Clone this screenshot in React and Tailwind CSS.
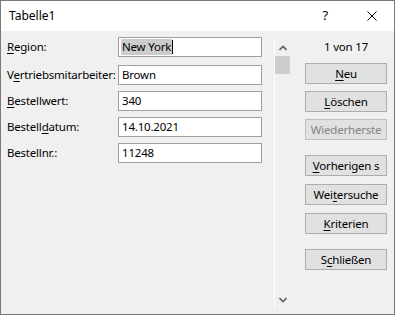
import React from 'react';

const fields = [
  { key: 'R', rest: 'egion:', pre: '', value: 'New York', selected: true },
  { pre: 'V', key: 'e', rest: 'rtriebsmitarbeiter:', value: 'Brown' },
  { pre: '', key: 'B', rest: 'estellwert:', value: '340' },
  { pre: 'Bestell', key: 'd', rest: 'atum:', value: '14.10.2021' },
  { pre: 'Bestellnr.:', key: '', rest: '', value: '11248' },
];

const buttons = [
  { pre: '', key: 'N', rest: 'eu', mt: 'mt-[9px]' },
  { pre: '', key: 'L', rest: 'öschen', mt: 'mt-[7px]' },
  { pre: 'Wiederherste', key: '', rest: '', mt: 'mt-[7px]', disabled: true },
  { pre: '', key: 'V', rest: 'orherigen s', mt: 'mt-[15px]' },
  { pre: 'Wei', key: 't', rest: 'ersuche', mt: 'mt-[8px]' },
  { pre: '', key: 'K', rest: 'riterien', mt: 'mt-[8px]' },
  { pre: 'S', key: 'c', rest: 'hließen', mt: 'mt-[15px]' },
];

const Label = ({ pre, k, rest }) => (
  <>
    {pre}
    {k && <span className="underline underline-offset-2">{k}</span>}
    {rest}
  </>
);

export default function App() {
  return (
    <div className="w-[395px] h-[315px] border border-[#7a7a7a] bg-[#f0f0f0] flex flex-col font-['Noto_Sans',sans-serif] text-[11.5px] tracking-[-0.2px] text-black">
      {/* Title bar */}
      <div className="h-[30px] bg-white flex items-center pl-[8px] shrink-0">
        <span className="text-[12px] tracking-normal">Tabelle1</span>
        <span className="ml-auto mr-[39px] text-[13px]">?</span>
        <svg width="10" height="10" viewBox="0 0 10 10" className="mr-[17px]">
          <path d="M0.5 0.5 L9.5 9.5 M9.5 0.5 L0.5 9.5" stroke="#000" strokeWidth="1" />
        </svg>
      </div>

      <div className="flex flex-1">
        {/* Fields */}
        <div className="w-[273px] pl-[6px] pt-[6px] flex flex-col gap-[6px]">
          {fields.map((f, i) => (
            <div key={i} className={`flex items-center ${i === 0 ? 'mb-[2px]' : ''}`}>
              <div className="w-[111px] leading-[20px] whitespace-nowrap">
                <Label pre={f.pre} k={f.key} rest={f.rest} />
              </div>
              <div className="w-[144px] h-[20px] bg-white border border-[#a0a0a0] flex items-center pl-[2px] leading-[16px]">
                {f.selected ? (
                  <>
                    <span className="bg-[#cccccc] px-[1px]">{f.value}</span>
                    <span className="w-px h-[14px] bg-black" />
                  </>
                ) : (
                  <span className="px-[1px]">{f.value}</span>
                )}
              </div>
            </div>
          ))}
        </div>

        {/* Separator */}
        <div className="w-px bg-white mt-[8px] mb-[6px]" />

        {/* Scroll strip */}
        <div className="w-[16px] flex flex-col items-center">
          <svg width="8" height="6" viewBox="0 0 8 6" className="mt-[14px]">
            <path d="M0.5 5 L4 1.5 L7.5 5" fill="none" stroke="#606060" strokeWidth="1.6" />
          </svg>
          <div className="w-[15px] h-[18px] bg-[#cdcdcd] mt-[5px] self-start" />
          <svg width="8" height="6" viewBox="0 0 8 6" className="mt-auto mb-[11px]">
            <path d="M0.5 1 L4 4.5 L7.5 1" fill="none" stroke="#606060" strokeWidth="1.6" />
          </svg>
        </div>

        {/* Buttons */}
        <div className="pl-[14px] pt-[8px] flex flex-col">
          <div className="w-[82px] text-center leading-[15px]">1 von 17</div>
          {buttons.map((b, i) => (
            <div
              key={i}
              className={`${b.mt} w-[82px] h-[21px] border flex items-center justify-center overflow-hidden whitespace-nowrap leading-[16px] ${
                b.disabled
                  ? 'bg-[#e1e1e1] border-[#bfbfbf] text-[#838383]'
                  : 'bg-[#e1e1e1] border-[#adadad]'
              }`}
            >
              <Label pre={b.pre} k={b.key} rest={b.rest} />
            </div>
          ))}
        </div>
      </div>
    </div>
  );
}
